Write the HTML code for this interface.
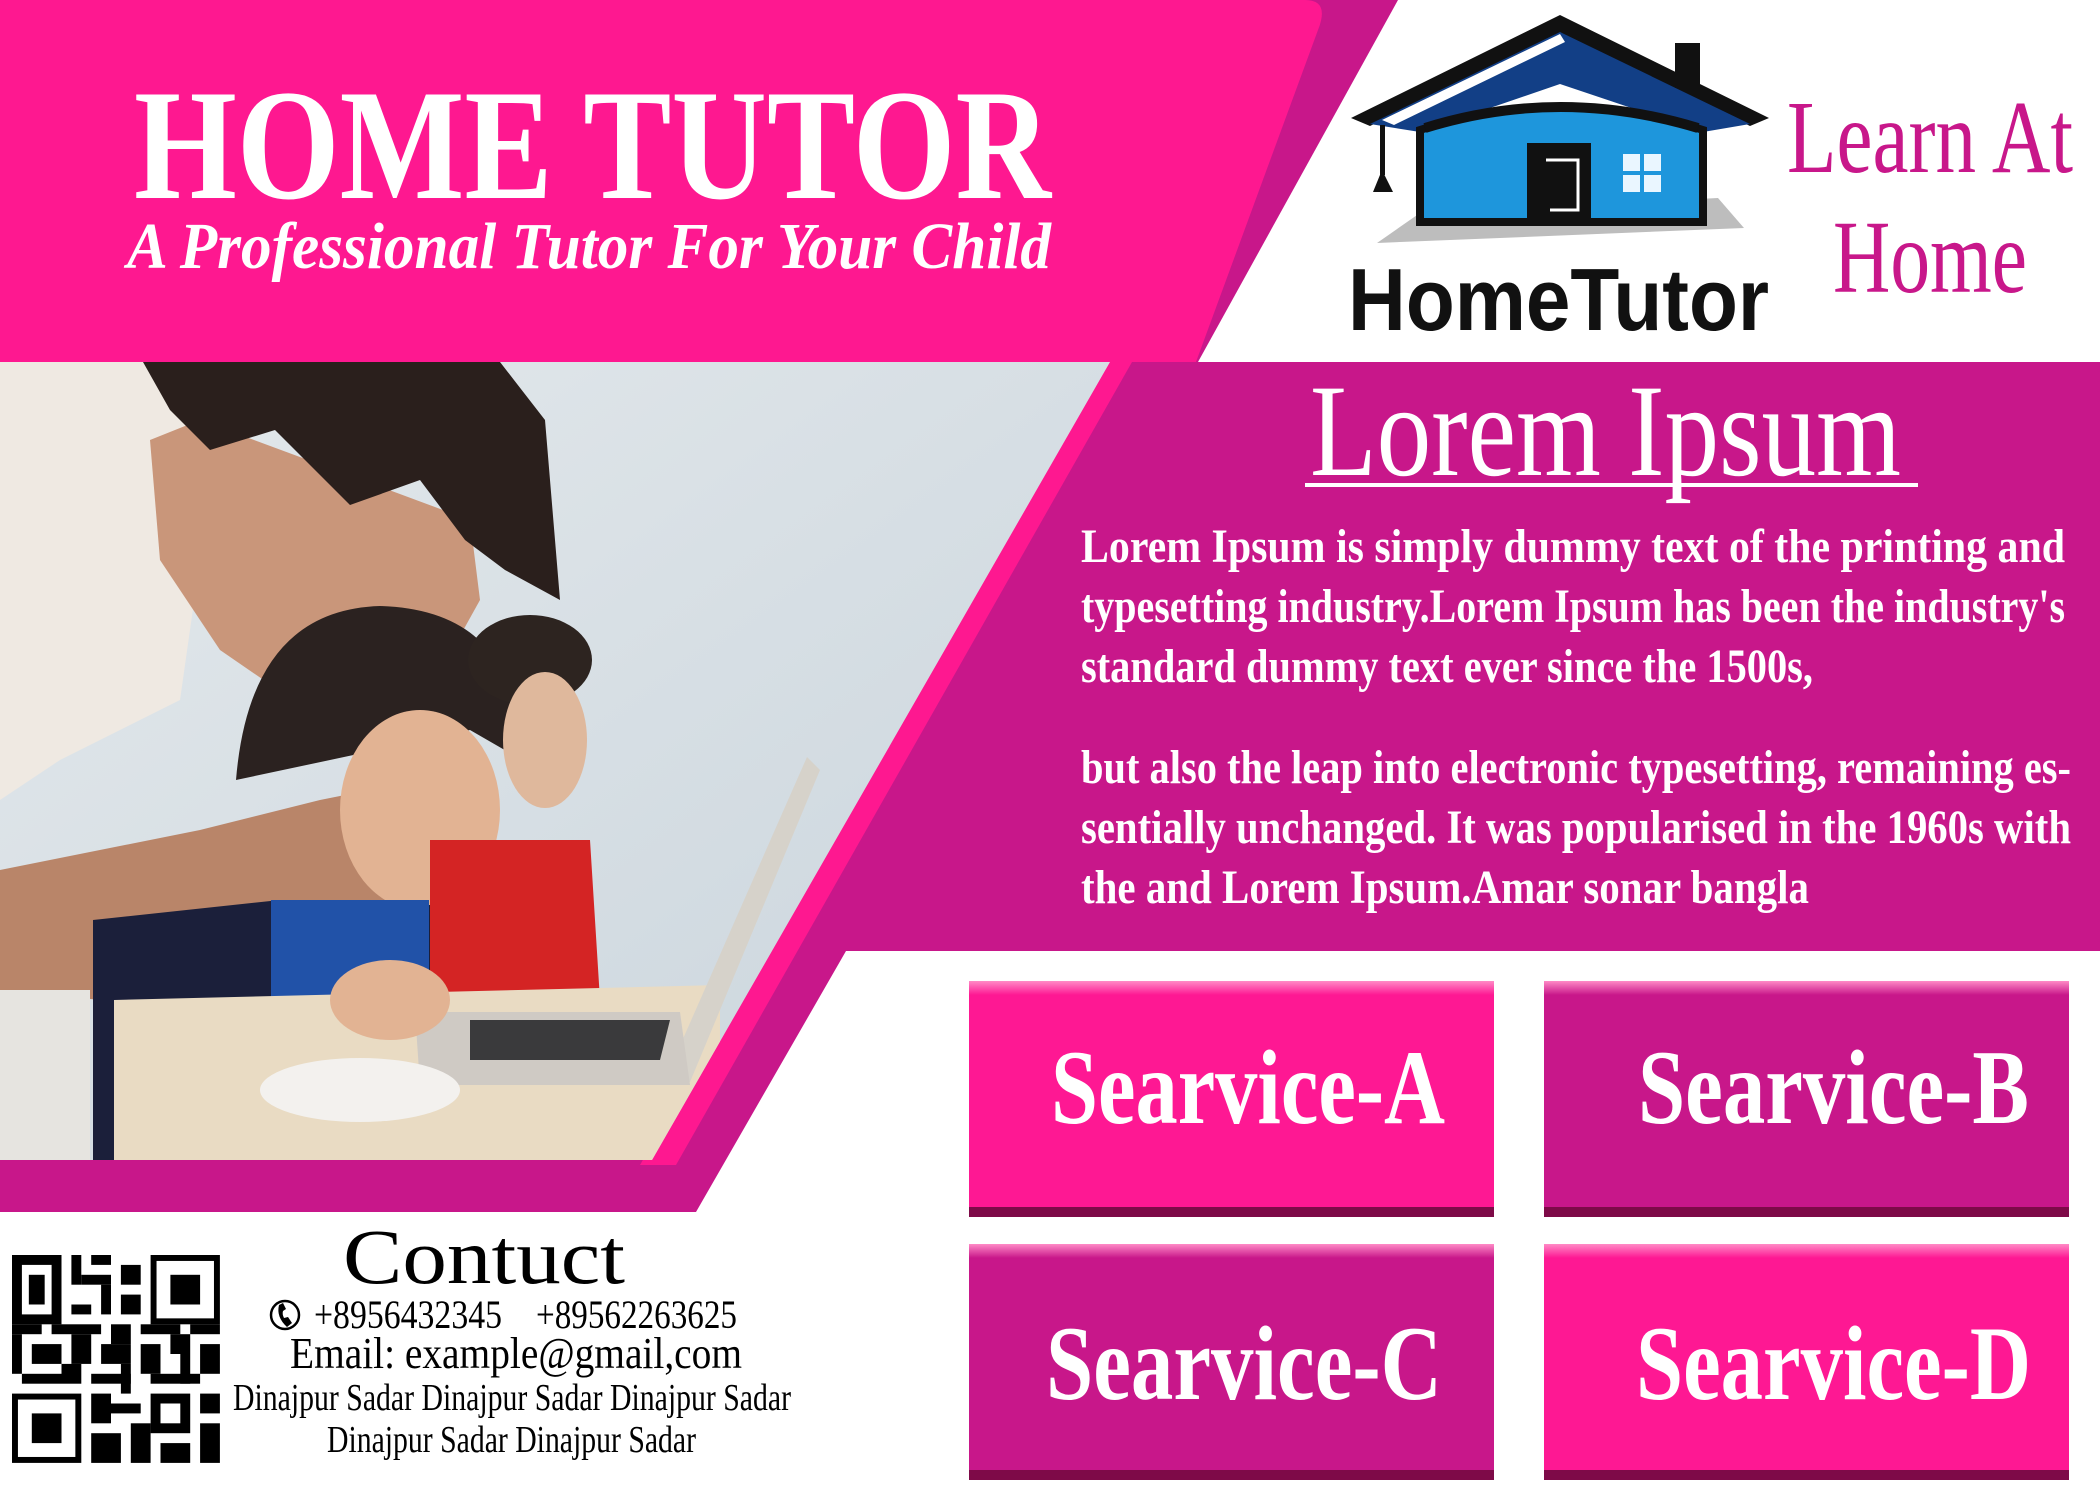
<!DOCTYPE html>
<html><head><meta charset="utf-8"><style>
html,body{margin:0;padding:0;background:#fff}
svg{display:block}
</style></head><body>
<svg width="2100" height="1500" viewBox="0 0 2100 1500" xmlns="http://www.w3.org/2000/svg">
<defs>
<clipPath id="ph"><polygon points="0,362 1110,362 652,1160 0,1160"/></clipPath>
<linearGradient id="bg" x1="0" y1="0" x2="1" y2="1"><stop offset="0" stop-color="#e4e9ec"/><stop offset="1" stop-color="#c9d4dc"/></linearGradient>
<linearGradient id="bt" x1="0" y1="0" x2="0" y2="1"><stop offset="0" stop-color="#ff8ac6"/><stop offset="1" stop-color="#ff8ac6" stop-opacity="0"/></linearGradient>
</defs>
<rect width="2100" height="1500" fill="#fff"/>
<polygon points="1300,0 1398,0 1198,362 1180,362" fill="#c8178a"/>
<path d="M0,0 H1305 Q1330,0 1318,30 L1196,362 H0 Z" fill="#fe1890"/>
<polygon points="1110,362 2100,362 2100,951 846,951 696,1212 0,1212 0,362" fill="#c8178a"/>
<polygon points="1100,362 1132,362 676,1165 640,1165" fill="#fe1890"/>
<g clip-path="url(#ph)">
<rect x="0" y="362" width="1120" height="800" fill="url(#bg)"/>
<polygon points="0,362 190,362 200,560 180,700 60,760 0,800" fill="#efe9e2"/>
<polygon points="150,440 200,420 470,520 480,600 430,690 300,705 220,650 160,560" fill="#c9967a"/>
<polygon points="143,362 500,362 545,420 560,600 505,570 465,540 420,480 350,505 275,430 210,450 170,410" fill="#2a1f1c"/>
<polygon points="0,990 0,870 200,830 320,800 420,780 440,870 380,990 200,1010" fill="#b98569"/>
<rect x="0" y="990" width="90" height="170" fill="#e6e4e0"/>
<path d="M236,780 Q250,610 380,606 Q520,610 522,760 L470,730 L330,760 Z" fill="#2b2220"/>
<ellipse cx="420" cy="810" rx="80" ry="100" fill="#e2b393"/>
<ellipse cx="530" cy="660" rx="62" ry="45" fill="#2d2420"/>
<ellipse cx="545" cy="740" rx="42" ry="68" fill="#dfb89c"/>
<polygon points="430,840 590,840 600,1000 430,1000" fill="#d42424"/>
<polygon points="93,920 280,900 430,905 430,1160 93,1160" fill="#1b1f3a"/>
<polygon points="271,900 429,900 429,1030 271,1030" fill="#2152a8"/>
<polygon points="114,1000 720,985 720,1160 114,1160" fill="#e9dbc3"/>
<polygon points="807,757 820,770 690,1082 664,1082" fill="#d6d2ca"/>
<polygon points="415,1012 680,1012 690,1085 420,1085" fill="#cfcac4"/>
<polygon points="470,1020 670,1020 660,1060 470,1060" fill="#3a3a3c"/>
<ellipse cx="360" cy="1090" rx="100" ry="32" fill="#f3f1ee"/>
<ellipse cx="390" cy="1000" rx="60" ry="40" fill="#e2b393"/>
</g>
<text x="134" y="198" font-family="Liberation Serif" font-weight="bold" font-size="158" fill="#fff" textLength="917" lengthAdjust="spacingAndGlyphs">HOME TUTOR</text>
<text x="127" y="268" font-family="Liberation Serif" font-style="italic" font-weight="bold" font-size="66" fill="#fff" textLength="924" lengthAdjust="spacingAndGlyphs">A Professional Tutor For Your Child</text>
<polygon points="1377,243 1744,228 1718,198 1420,213" fill="#bdbdbd"/>
<polygon points="1351,118 1560,15 1769,118 1750,126 1560,34 1370,126" fill="#111"/>
<polygon points="1370,124 1560,32 1750,124 1703,132 1560,84 1420,132" fill="#123f86"/>
<polygon points="1382,120 1560,34 1565,42 1394,125" fill="#fff"/>
<rect x="1675" y="43" width="25" height="45" fill="#111"/>
<path d="M1420,130 Q1560,84 1703,130 V222 H1420 Z" fill="#1e96dc" stroke="#111" stroke-width="8"/>
<path d="M1425,128 Q1560,86 1698,128" fill="none" stroke="#111" stroke-width="10"/>
<rect x="1527" y="143" width="64" height="75" fill="#111"/>
<path d="M1546,160 H1578 V210 H1550" fill="none" stroke="#fff" stroke-width="3"/>
<rect x="1543" y="163" width="14" height="45" fill="#111"/>
<rect x="1623" y="154" width="17" height="17" fill="#eaf6ff"/><rect x="1644" y="154" width="17" height="17" fill="#eaf6ff"/>
<rect x="1623" y="175" width="17" height="17" fill="#eaf6ff"/><rect x="1644" y="175" width="17" height="17" fill="#eaf6ff"/>
<rect x="1380" y="125" width="5" height="50" fill="#111"/>
<path d="M1382,170 L1373,192 H1393 Z" fill="#111"/>
<text x="1348" y="330" font-family="Liberation Sans" font-weight="bold" font-size="88" fill="#111" textLength="421" lengthAdjust="spacingAndGlyphs">HomeTutor</text>
<text x="1787" y="172" font-family="Liberation Serif" font-size="104" fill="#c8178a" textLength="286" lengthAdjust="spacingAndGlyphs">Learn At</text>
<text x="1833" y="292" font-family="Liberation Serif" font-size="104" fill="#c8178a" textLength="194" lengthAdjust="spacingAndGlyphs">Home</text>
<text x="1310" y="475" font-family="Liberation Serif" font-size="132" fill="#fff" textLength="591" lengthAdjust="spacingAndGlyphs">Lorem Ipsum</text>
<rect x="1305" y="483" width="613" height="4" fill="#fff"/>
<g font-family="Liberation Serif" font-weight="bold" font-size="48" fill="#fff" xml:space="preserve">
<text x="1081" y="562" textLength="984" lengthAdjust="spacingAndGlyphs">Lorem Ipsum is simply dummy text of the printing and</text>
<text x="1081" y="622" textLength="984" lengthAdjust="spacingAndGlyphs">typesetting industry.Lorem Ipsum has been the industry's</text>
<text x="1081" y="682" textLength="732" lengthAdjust="spacingAndGlyphs">standard dummy text ever since the 1500s,</text>
<text x="1081" y="783" textLength="990" lengthAdjust="spacingAndGlyphs">but also the leap into electronic typesetting, remaining es-</text>
<text x="1081" y="843" textLength="990" lengthAdjust="spacingAndGlyphs">sentially unchanged. It was popularised in the 1960s with</text>
<text x="1081" y="903" textLength="728" lengthAdjust="spacingAndGlyphs">the and  Lorem Ipsum.Amar sonar bangla</text>
</g>
<g font-family="Liberation Serif" font-weight="bold" font-size="106" fill="#fff">
<rect x="969" y="981" width="525" height="236" fill="#fe1893"/><rect x="969" y="981" width="525" height="14" fill="url(#bt)"/><rect x="969" y="1207" width="525" height="10" fill="#7e0a48"/>
<text x="1051" y="1123" textLength="394" lengthAdjust="spacingAndGlyphs">Searvice-A</text>
<rect x="1544" y="981" width="525" height="236" fill="#c8178a"/><rect x="1544" y="981" width="525" height="14" fill="url(#bt)"/><rect x="1544" y="1207" width="525" height="10" fill="#7e0a48"/>
<text x="1638" y="1123" textLength="391" lengthAdjust="spacingAndGlyphs">Searvice-B</text>
<rect x="969" y="1244" width="525" height="236" fill="#c8178a"/><rect x="969" y="1244" width="525" height="14" fill="url(#bt)"/><rect x="969" y="1470" width="525" height="10" fill="#7e0a48"/>
<text x="1046" y="1399" textLength="396" lengthAdjust="spacingAndGlyphs">Searvice-C</text>
<rect x="1544" y="1244" width="525" height="236" fill="#fe1893"/><rect x="1544" y="1244" width="525" height="14" fill="url(#bt)"/><rect x="1544" y="1470" width="525" height="10" fill="#7e0a48"/>
<text x="1636" y="1399" textLength="395" lengthAdjust="spacingAndGlyphs">Searvice-D</text>
</g>
<g font-family="Liberation Serif" fill="#000">
<text x="343" y="1283" font-size="78" textLength="282" lengthAdjust="spacingAndGlyphs">Contuct</text>
<circle cx="285" cy="1315" r="14" fill="none" stroke="#000" stroke-width="2.5"/>
<path d="M279,1305 Q276,1317 287,1327 L292,1323 L288,1317 L284,1318 Q282,1314 283,1311 L286,1309 L283,1303 Z" fill="#000"/>
<text x="314" y="1328" font-size="40" textLength="188" lengthAdjust="spacingAndGlyphs">+8956432345</text>
<text x="536" y="1328" font-size="40" textLength="201" lengthAdjust="spacingAndGlyphs">+89562263625</text>
<text x="290" y="1368" font-size="44" textLength="452" lengthAdjust="spacingAndGlyphs">Email: example@gmail,com</text>
<text x="233" y="1410" font-size="38" textLength="558" lengthAdjust="spacingAndGlyphs">Dinajpur Sadar Dinajpur Sadar Dinajpur Sadar</text>
<text x="327" y="1452" font-size="38" textLength="369" lengthAdjust="spacingAndGlyphs">Dinajpur Sadar Dinajpur Sadar</text>
</g>
<g fill="#000" transform="translate(12,1255) scale(9.9)">
<rect x="0" y="0" width="5" height="7"/><rect x="1" y="1" width="3" height="5" fill="#fff"/><rect x="1.7" y="2" width="1.6" height="3"/>
<rect x="14" y="0" width="7" height="7"/><rect x="14.6" y="0.6" width="5.8" height="5.8" fill="#fff"/><rect x="16" y="2" width="3" height="3"/>
<rect x="0" y="14" width="7" height="7"/><rect x="0.6" y="14.6" width="5.8" height="5.8" fill="#fff"/><rect x="2" y="16" width="3" height="3"/>
<rect x="6" y="0" width="1" height="3"/><rect x="8" y="0" width="2" height="1"/><rect x="7" y="2" width="3" height="1"/><rect x="11" y="1" width="2" height="2"/><rect x="9" y="3" width="1" height="3"/><rect x="11" y="4" width="2" height="2"/><rect x="6" y="5" width="2" height="1"/>
<rect x="0" y="7" width="3" height="1"/><rect x="4" y="7" width="5" height="1"/><rect x="10" y="7" width="2" height="2"/><rect x="13" y="7" width="4" height="1"/><rect x="18" y="7" width="3" height="1"/>
<rect x="0" y="8" width="1" height="4"/><rect x="2" y="9" width="3" height="2"/><rect x="6" y="8" width="2" height="3"/><rect x="9" y="9" width="3" height="2"/><rect x="13" y="9" width="2" height="3"/><rect x="16" y="8" width="2" height="2"/><rect x="19" y="9" width="2" height="3"/>
<rect x="1" y="12" width="4" height="1"/><rect x="5" y="11" width="2" height="2"/><rect x="8" y="12" width="4" height="1"/><rect x="11" y="11" width="1" height="3"/><rect x="14" y="12" width="5" height="1"/><rect x="17" y="10" width="1" height="3"/>
<rect x="8" y="14" width="2" height="3"/><rect x="10" y="15" width="3" height="1"/><rect x="14" y="14" width="4" height="4"/><rect x="15" y="15" width="2" height="2" fill="#fff"/><rect x="19" y="14" width="2" height="2"/>
<rect x="8" y="18" width="3" height="3"/><rect x="12" y="17" width="2" height="4"/><rect x="15" y="19" width="3" height="2"/><rect x="19" y="17" width="2" height="4"/>
</g>
</svg>
</body></html>
